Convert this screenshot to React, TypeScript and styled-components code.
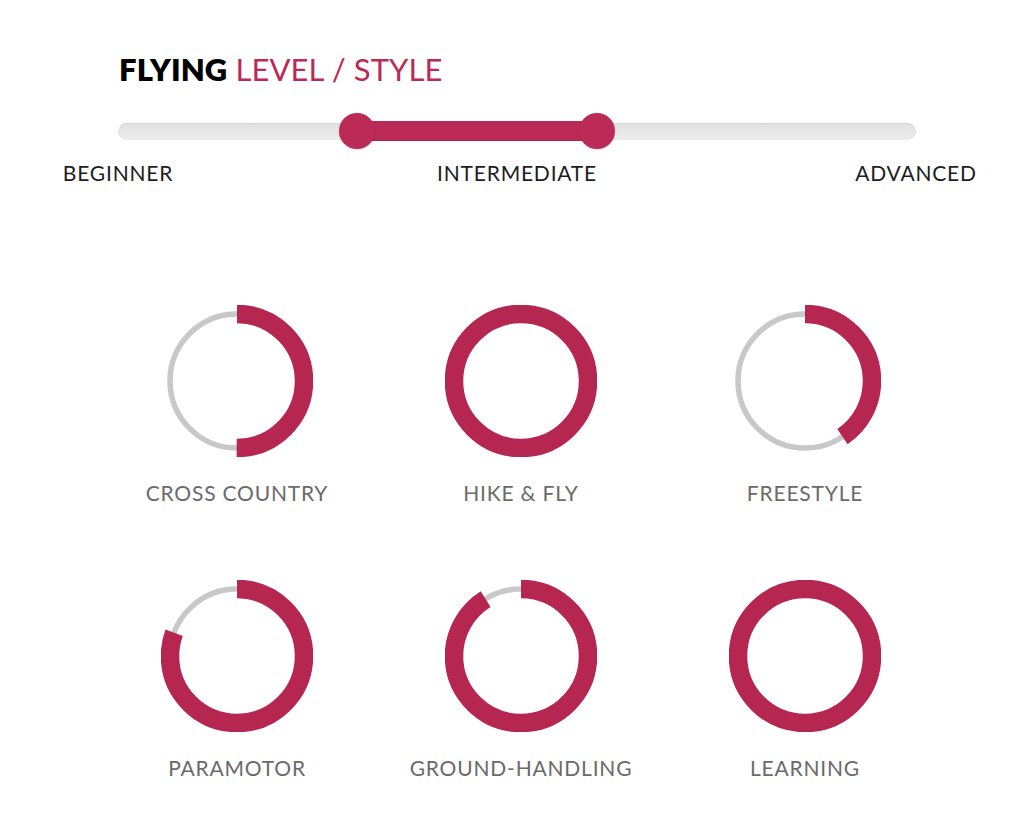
import React from "react";
import styled, { createGlobalStyle } from "styled-components";

const Global = createGlobalStyle`
  html, body { margin: 0; padding: 0; background: #fff; }
  body { font-family: Lato, "Open Sans", Arial, sans-serif; }
`;

const Page = styled.div`
  width: 1024px;
  height: 834px;
  background: #fff;
  display: flex;
  flex-direction: column;
`;

const Title = styled.h1`
  margin: 51px 0 0 119px;
  font-size: 31px;
  line-height: 36px;
  font-weight: 400;
  letter-spacing: 0.1px;
  color: #bb2a56;
`;

const Strong = styled.span`
  font-weight: 800;
  color: #000;
`;

const SliderWrap = styled.div`
  margin: 26px 0 0 118px;
  width: 798px;
  height: 36px;
  position: relative;
  display: flex;
  align-items: center;
`;

const Track = styled.div`
  width: 100%;
  height: 17px;
  border-radius: 9px;
  background: linear-gradient(#e2e2e2, #ececec);
  box-shadow: inset 0 1px 2px rgba(0, 0, 0, 0.06);
`;

const Range = styled.div`
  position: absolute;
  top: 8px;
  height: 19px;
  background: #bb2a56;
  box-shadow: 0 1px 0 #a8224b;
`;

const Handle = styled.div`
  position: absolute;
  top: 0;
  width: 36px;
  height: 36px;
  margin-left: -18px;
  border-radius: 50%;
  background: #bc2b57;
  box-shadow: 0 1px 2px rgba(0, 0, 0, 0.15);
`;

const Labels = styled.div`
  margin: 12px 0 0 118px;
  width: 798px;
  display: flex;
  justify-content: space-between;
`;

const LabelSlot = styled.div`
  width: 0;
  display: flex;
  justify-content: center;
  white-space: nowrap;
  font-size: 21px;
  line-height: 24px;
  letter-spacing: 0.8px;
  color: #1d1d1d;
`;

const Grid = styled.div`
  margin: 120px 0 0 95px;
  width: 852px;
  display: grid;
  grid-template-columns: repeat(3, 284px);
  row-gap: 75px;
`;

const Item = styled.div`
  display: flex;
  flex-direction: column;
  align-items: center;
`;

const ItemLabel = styled.div`
  margin-top: 24px;
  font-size: 21px;
  line-height: 24px;
  letter-spacing: 0.8px;
  color: #6a6a6a;
  white-space: nowrap;
`;

const R = 67;
const C = 2 * Math.PI * R;

function Ring({ pct }: { pct: number }) {
  const len = (C * pct) / 100;
  return (
    <svg width="152" height="152" viewBox="0 0 152 152">
      <circle cx="76" cy="76" r={R} fill="none" stroke="#c8c8c8" strokeWidth="5.5" />
      <circle
        cx="76"
        cy="76"
        r={R}
        fill="none"
        stroke="#b52751"
        strokeWidth="18.5"
        strokeDasharray={`${len} ${C}`}
        transform="rotate(-90 76 76)"
      />
    </svg>
  );
}

const items = [
  { label: "CROSS COUNTRY", pct: 50 },
  { label: "HIKE & FLY", pct: 100 },
  { label: "FREESTYLE", pct: 40.5 },
  { label: "PARAMOTOR", pct: 80.5 },
  { label: "GROUND-HANDLING", pct: 91 },
  { label: "LEARNING", pct: 100 },
];

export default function App() {
  const lo = 239;
  const hi = 479;
  return (
    <Page>
      <Global />
      <Title>
        <Strong>FLYING</Strong> LEVEL / STYLE
      </Title>
      <SliderWrap>
        <Track />
        <Range style={{ left: lo, width: hi - lo }} />
        <Handle style={{ left: lo }} />
        <Handle style={{ left: hi }} />
      </SliderWrap>
      <Labels>
        <LabelSlot>BEGINNER</LabelSlot>
        <LabelSlot>INTERMEDIATE</LabelSlot>
        <LabelSlot>ADVANCED</LabelSlot>
      </Labels>
      <Grid>
        {items.map((it) => (
          <Item key={it.label}>
            <Ring pct={it.pct} />
            <ItemLabel>{it.label}</ItemLabel>
          </Item>
        ))}
      </Grid>
    </Page>
  );
}
